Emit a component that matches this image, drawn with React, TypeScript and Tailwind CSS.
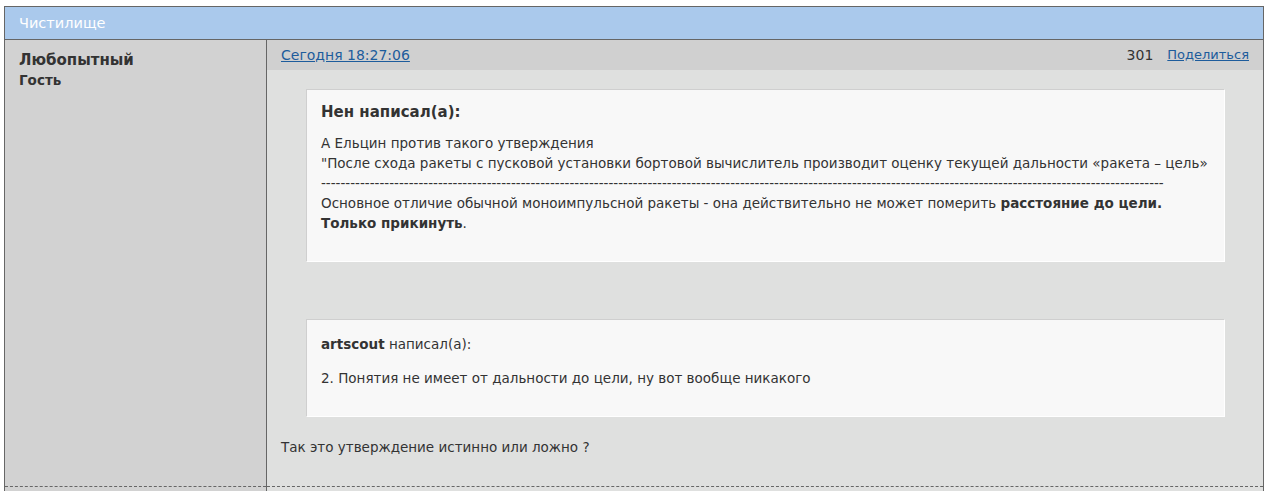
import React from 'react';

const font = { fontFamily: '"DejaVu Sans", Verdana, sans-serif' };

const App: React.FC = () => {
  return (
    <div className="w-[1268px] h-[491px] bg-white pt-[6px] px-[4px] overflow-hidden text-[13.5px] text-[#333]" style={font}>
      <div className="border border-[#666] border-b-0 h-[485px] flex flex-col">
        {/* Forum title */}
        <div className="h-[33px] bg-[#aac9ec] border-b border-[#666] flex items-center px-[14px] pt-[2px] text-[14.5px] text-white">
          Чистилище
        </div>

        <div className="flex flex-1">
          {/* Author */}
          <div className="w-[262px] bg-[#d2d2d2] border-r border-[#666] flex flex-col">
            <div className="flex-1 px-[14px] pt-[10px] font-bold leading-[20px] text-[#333]">
              <div className="text-[15px]">Любопытный</div>
              <div>Гость</div>
            </div>
            <div className="border-b border-dashed border-[#666] mb-[4px]" />
          </div>

          {/* Post */}
          <div className="flex-1 bg-[#dfe0df] flex flex-col">
            <div className="h-[30px] bg-[#d0d0d0] flex items-center justify-between px-[14px]">
              <a href="#" className="underline text-[#1d5c9c] text-[14px]">Сегодня 18:27:06</a>
              <div className="flex items-center gap-[14px]">
                <span className="text-[14px]">301</span>
                <a href="#" className="underline text-[#1d5c9c] text-[13px]">Поделиться</a>
              </div>
            </div>

            <div className="flex-1 px-[14px] pt-[19px]">
              <div className="ml-[25px] mr-[24px] bg-[#f8f8f8] border border-t-[#cfcfcf] border-l-[#cfcfcf] border-r-white border-b-white px-[14px] pt-[12px] pb-[28px] leading-[20px]">
                <div className="font-bold text-[15px] mb-[11px]">Нен написал(а):</div>
                <div>А Ельцин против такого утверждения</div>
                <div>"После схода ракеты с пусковой установки бортовой вычислитель производит оценку текущей дальности «ракета – цель»</div>
                <div className="whitespace-nowrap">{'-'.repeat(173)}</div>
                <div>
                  Основное отличие обычной моноимпульсной ракеты - она действительно не может померить <b>расстояние до цели.</b>
                  <br />
                  <b>Только прикинуть</b>.
                </div>
              </div>

              <div className="ml-[25px] mr-[24px] mt-[57px] bg-[#f8f8f8] border border-t-[#cfcfcf] border-l-[#cfcfcf] border-r-white border-b-white px-[14px] pt-[14px] pb-[28px] leading-[20px]">
                <div className="mb-[14px]"><b>artscout</b> написал(а):</div>
                <div>2. Понятия не имеет от дальности до цели, ну вот вообще никакого</div>
              </div>

              <div className="mt-[20px] leading-[20px]">Так это утверждение истинно или ложно ?</div>
            </div>
            <div className="border-b border-dashed border-[#666] mb-[4px]" />
          </div>
        </div>
      </div>
    </div>
  );
};

export default App;
